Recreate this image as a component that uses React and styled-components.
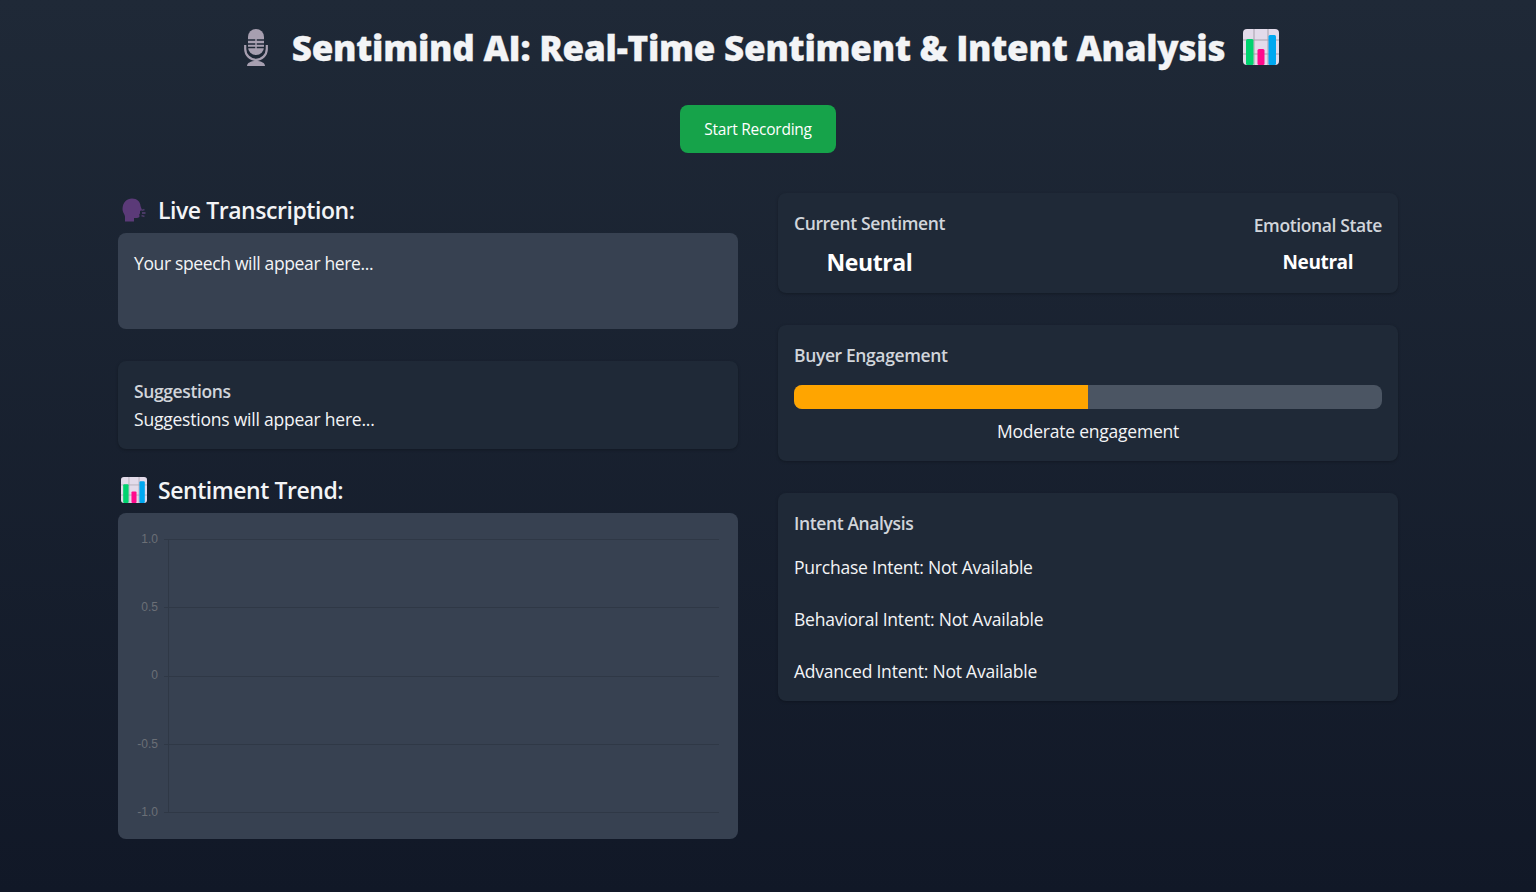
import React from 'react';
import styled, { createGlobalStyle } from 'styled-components';

const GlobalStyle = createGlobalStyle`
    html, body {
        margin: 0;
        padding: 0;
    }
    body {
        font-family: "Open Sans", "Noto Sans", "Liberation Sans", sans-serif;
        color: #fff;
    }
    * {
        box-sizing: border-box;
    }
`;

const Page = styled.div`
    height: 892px;
    overflow: hidden;
    padding: 23px 20px 0 0;
    background: linear-gradient(to bottom, #1f2937, #111827);
`;

const Title = styled.h1`
    display: flex;
    justify-content: center;
    align-items: center;
    gap: 18px;
    height: 48px;
    margin: 0;
    font-size: 35px;
    font-weight: 800;
    letter-spacing: -0.25px;
    color: #f3f4f6;
    -webkit-text-stroke: 0.3px #f3f4f6;
`;

const MicSlot = styled.span`
    display: flex;
    margin: 0 6px 0 7px;
`;

const ButtonRow = styled.div`
    display: flex;
    justify-content: center;
    margin-top: 34px;
`;

const RecordButton = styled.button`
    width: 156px;
    height: 48px;
    border: none;
    border-radius: 8px;
    background-color: #16a34a;
    color: #fff;
    font-family: inherit;
    font-size: 15.5px;
    letter-spacing: -0.25px;
    cursor: pointer;
`;

const Columns = styled.div`
    display: grid;
    grid-template-columns: 620px 620px;
    gap: 40px;
    width: 1280px;
    margin: 40px auto 0;
`;

const Column = styled.div`
    display: flex;
    flex-direction: column;
`;

const RightColumn = styled(Column)`
    gap: 32px;
`;

const SectionTitle = styled.h2`
    display: flex;
    align-items: center;
    gap: 11px;
    height: 34px;
    margin: 0 0 6px;
    padding-left: 3px;
    font-size: 23px;
    font-weight: 600;
    letter-spacing: -0.45px;
    color: #f3f4f6;
`;

const TranscriptBox = styled.div`
    height: 96px;
    padding: 16px;
    border-radius: 8px;
    background-color: #374151;
    font-size: 17.5px;
    line-height: 28px;
    letter-spacing: -0.35px;
    color: #f3f4f6;
`;

const Card = styled.div`
    padding: 16px;
    border-radius: 8px;
    background-color: #1f2937;
    box-shadow: 0 1px 3px rgba(0, 0, 0, 0.25);
`;

const SuggestionsCard = styled(Card)`
    height: 88px;
    margin: 32px 0 24px;
`;

const CardLabel = styled.div`
    font-size: 17.5px;
    line-height: 28px;
    font-weight: 600;
    letter-spacing: -0.38px;
    color: #d1d5db;
`;

const BodyText = styled.div`
    font-size: 17.5px;
    line-height: 28px;
    letter-spacing: -0.22px;
    color: #f3f4f6;
`;

const ChartBox = styled.div`
    height: 326px;
    border-radius: 8px;
    background-color: #374151;
`;

const SentimentCard = styled(Card)`
    display: flex;
    justify-content: space-between;
    align-items: flex-start;
    height: 100px;
`;

const SentimentBlock = styled.div`
    display: flex;
    flex-direction: column;
    align-items: center;
    margin-top: ${(props) => (props.$large ? '0' : '2px')};
`;

const SentimentValue = styled.div`
    margin-top: ${(props) => (props.$large ? '9px' : '7px')};
    font-size: ${(props) => (props.$large ? '23px' : '19px')};
    line-height: 32px;
    font-weight: 700;
    letter-spacing: -0.4px;
    color: #fff;
`;

const EngagementCard = styled(Card)`
    height: 136px;
`;

const Track = styled.div`
    height: 24px;
    margin-top: 16px;
    border-radius: 8px;
    overflow: hidden;
    background-color: #4b5563;
`;

const Fill = styled.div`
    height: 100%;
    background-color: orange;
`;

const Centered = styled(BodyText)`
    margin-top: 8px;
    text-align: center;
`;

const IntentCard = styled(Card)`
    height: 208px;
`;

const IntentList = styled.div`
    display: flex;
    flex-direction: column;
    gap: 24px;
    margin-top: 16px;
`;

const MicIcon = () => (
    <svg width="24" height="37" viewBox="0 0 24 37">
        <rect x="4" y="0" width="16" height="26" rx="8" fill="#a79fb0" />
        <path d="M4 11h16M4 15h16M4 18.500h16" stroke="#1f2937" strokeWidth="1.500" />
        <path d="M12 8v12" stroke="#a79fb0" strokeWidth="1.500" />
        <path d="M1.200 16v4a10.800 10.800 0 0 0 21.600 0v-4" fill="none" stroke="#a79fb0" strokeWidth="2.200" />
        <path d="M10.500 30h3v3h-3z" fill="#a79fb0" />
        <path d="M3 37c0-3 3.500-5 9-5s9 2 9 5z" fill="#a79fb0" />
    </svg>
);

const ChartIcon = ({ size }) => (
    <svg width={size} height={size} viewBox="0 0 36 36">
        <rect width="36" height="36" rx="4" fill="#e3dbea" />
        <path d="M11 0v36M25 0v36M0 11h36M0 25h36" stroke="#a7a1ac" strokeWidth="1" />
        <rect x="3" y="10" width="7.500" height="26" rx="1.500" fill="#00d36f" />
        <rect x="14.500" y="20" width="7" height="16" rx="1.500" fill="#ff0a8c" />
        <rect x="25.500" y="6" width="7.500" height="30" rx="1.500" fill="#00a8f0" />
    </svg>
);

const SpeakingHead = () => (
    <svg width="26" height="24" viewBox="0 0 26 24">
        <path
            d="M1.500 11C1.500 4.500 6 .5 11 .5c5 0 8.500 3.500 8.500 7.500l1.500 4-2 1v2.500l-.8.8.3 1.700c0 2-2.500 2-5.500 2v3.500H4v-4.500c0-3-2.500-4-2.500-8.500z"
            fill="#5b3a78"
        />
        <path d="M20.500 12.500l3-1M21 15h3.500M20.500 17.500l3 1" stroke="#4a3a66" strokeWidth="1.800" />
    </svg>
);

const TICKS = [
    { label: '1.0', y: 27, textY: 30 },
    { label: '0.5', y: 95, textY: 98 },
    { label: '0', y: 164, textY: 166 },
    { label: '-0.5', y: 232, textY: 235 },
    { label: '-1.0', y: 300, textY: 303 },
];

const TrendChart = () => (
    <svg width="620" height="326" viewBox="0 0 620 326">
        <path d="M50.500 27v273" stroke="#2f3846" />
        {TICKS.map((tick) => (
            <g key={tick.label}>
                <path d={`M46 ${tick.y - 0.5}H601`} stroke="#2f3846" />
                <text x="40" y={tick.textY} textAnchor="end" fontFamily="Liberation Sans" fontSize="12" fill="#6b6f76">
                    {tick.label}
                </text>
            </g>
        ))}
    </svg>
);

const App = () => {
    return (
        <>
            <GlobalStyle />
            <Page>
                <Title>
                    <MicSlot>
                        <MicIcon />
                    </MicSlot>
                    <span>Sentimind AI: Real-Time Sentiment &amp; Intent Analysis</span>
                    <ChartIcon size={36} />
                </Title>
                <ButtonRow>
                    <RecordButton>Start Recording</RecordButton>
                </ButtonRow>
                <Columns>
                    <Column>
                        <SectionTitle>
                            <SpeakingHead />
                            Live Transcription:
                        </SectionTitle>
                        <TranscriptBox>Your speech will appear here...</TranscriptBox>
                        <SuggestionsCard>
                            <CardLabel>Suggestions</CardLabel>
                            <BodyText>Suggestions will appear here...</BodyText>
                        </SuggestionsCard>
                        <SectionTitle>
                            <ChartIcon size={26} />
                            Sentiment Trend:
                        </SectionTitle>
                        <ChartBox>
                            <TrendChart />
                        </ChartBox>
                    </Column>
                    <RightColumn>
                        <SentimentCard>
                            <SentimentBlock $large>
                                <CardLabel>Current Sentiment</CardLabel>
                                <SentimentValue $large>Neutral</SentimentValue>
                            </SentimentBlock>
                            <SentimentBlock>
                                <CardLabel>Emotional State</CardLabel>
                                <SentimentValue>Neutral</SentimentValue>
                            </SentimentBlock>
                        </SentimentCard>
                        <EngagementCard>
                            <CardLabel>Buyer Engagement</CardLabel>
                            <Track>
                                <Fill style={{ width: '50%' }} />
                            </Track>
                            <Centered>Moderate engagement</Centered>
                        </EngagementCard>
                        <IntentCard>
                            <CardLabel>Intent Analysis</CardLabel>
                            <IntentList>
                                <BodyText>Purchase Intent: Not Available</BodyText>
                                <BodyText>Behavioral Intent: Not Available</BodyText>
                                <BodyText>Advanced Intent: Not Available</BodyText>
                            </IntentList>
                        </IntentCard>
                    </RightColumn>
                </Columns>
            </Page>
        </>
    );
};

export default App;
